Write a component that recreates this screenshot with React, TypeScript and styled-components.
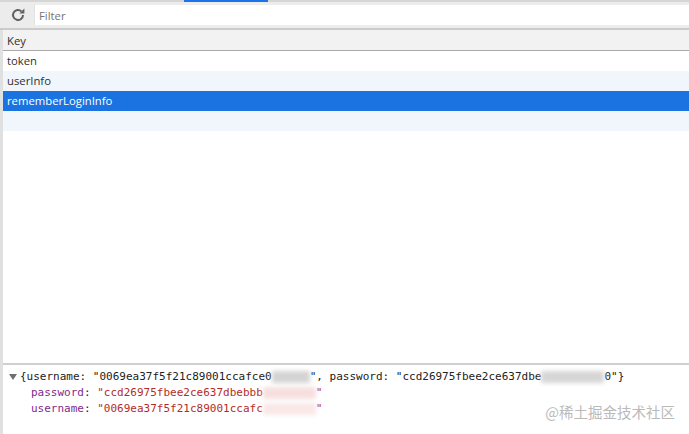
import * as React from "react";
import styled, { createGlobalStyle } from "styled-components";

const rows = ["token", "userInfo", "rememberLoginInfo", ""];

const GlobalStyle = createGlobalStyle`
  html, body {
    margin: 0;
    padding: 0;
    background: #fff;
    overflow: hidden;
  }
`;

const Page = styled.div`
  position: relative;
  width: 689px;
  height: 434px;
  display: flex;
  flex-direction: column;
  overflow: hidden;
  font-family: "Open Sans", "Noto Sans", sans-serif;
  font-size: 11.3px;
  color: #303030;
`;

const TabStrip = styled.div`
  flex: none;
  height: 2px;
  background: #d6d6d6;
  padding-left: 184px;
  i {
    display: block;
    width: 84px;
    height: 2px;
    background: #1a73e8;
  }
`;

const Toolbar = styled.div`
  flex: none;
  box-sizing: border-box;
  height: 28px;
  display: flex;
  align-items: center;
  background: #ececec;
  border-bottom: 2px solid #cbcbcb;
  padding: 0 0 0 10px;
`;

const Reload = styled.svg`
  width: 16px;
  height: 16px;
  flex: none;
  margin-right: 8px;
`;

const Filter = styled.div`
  flex: 1;
  box-sizing: border-box;
  height: 20px;
  background: #fff;
  border-left: 1px solid #e2e2e2;
  padding-left: 4px;
  line-height: 21px;
  color: #757575;
`;

const Panel = styled.div`
  flex: 1;
  display: flex;
  flex-direction: column;
  min-height: 0;
  border-left: 3px solid #e0e0e0;
`;

const HeaderCell = styled.div`
  flex: none;
  box-sizing: border-box;
  height: 21px;
  line-height: 21px;
  padding-left: 4px;
  background: #f2f2f2;
  border-bottom: 1px solid #a9a9a9;
`;

const Table = styled.div`
  flex: 1;
  min-height: 0;
  background: #fff;
`;

const Row = styled.div<{ $alt: boolean; $selected: boolean }>`
  height: 20px;
  line-height: 20px;
  padding-left: 4px;
  background: ${(p) => (p.$selected ? "#1a73e0" : p.$alt ? "#f1f6fd" : "#fff")};
  color: ${(p) => (p.$selected ? "#fff" : "#303030")};
`;

const Detail = styled.div`
  flex: none;
  box-sizing: border-box;
  height: 71px;
  border-top: 2px solid #cfcfcf;
  padding: 4px 0 0 6px;
  background: #fff;
  color: #222;
  font-family: "DejaVu Sans Mono", monospace;
  font-size: 11px;
  line-height: 16px;
  white-space: pre;
`;

const Line = styled.div<{ $indent?: boolean }>`
  display: flex;
  align-items: center;
  padding-left: ${(p) => (p.$indent ? "22px" : "0")};
`;

const Arrow = styled.span`
  width: 0;
  height: 0;
  margin: 0 3px 0 0;
  border-left: 4px solid transparent;
  border-right: 4px solid transparent;
  border-top: 6px solid #6e6e6e;
`;

const Prop = styled.span`
  color: #7f2a8c;
`;

const Str = styled.span`
  color: #b52b27;
`;

const Smudge = styled.span<{ $w: number; $color: string }>`
  flex: none;
  width: ${(p) => p.$w}px;
  height: 12px;
  background: ${(p) => p.$color};
  filter: blur(2px);
`;

const Watermark = styled.div`
  position: absolute;
  right: 14px;
  bottom: 13px;
  font-family: "Noto Sans CJK SC", sans-serif;
  font-size: 14.5px;
  line-height: 18px;
  color: #bababa;
`;

export default function App() {
  return (
    <Page>
      <GlobalStyle />
      <TabStrip>
        <i />
      </TabStrip>
      <Toolbar>
        <Reload viewBox="0 0 16 16" fill="none">
          <path d="M13 8a5 5 0 1 1-1.5-3.6" stroke="#616161" strokeWidth="2" />
          <path d="M9.4 6.6h5V1.6z" fill="#616161" />
        </Reload>
        <Filter>Filter</Filter>
      </Toolbar>
      <Panel>
        <HeaderCell>Key</HeaderCell>
        <Table>
          {rows.map((key, i) => (
            <Row key={i} $alt={i % 2 === 1} $selected={key === "rememberLoginInfo"}>
              {key}
            </Row>
          ))}
        </Table>
        <Detail>
          <Line>
            <Arrow />
            {'{username: "0069ea37f5f21c89001ccafce0'}
            <Smudge $w={38} $color="#d4d4d4" />
            {'", password: "ccd26975fbee2ce637dbe'}
            <Smudge $w={63} $color="#d6d6d6" />
            {'0"}'}
          </Line>
          <Line $indent>
            <Prop>password</Prop>: <Str>"ccd26975fbee2ce637dbebbb</Str>
            <Smudge $w={53} $color="#f7dfdf" />
            <Str>"</Str>
          </Line>
          <Line $indent>
            <Prop>username</Prop>: <Str>"0069ea37f5f21c89001ccafc</Str>
            <Smudge $w={53} $color="#f9e8e8" />
            <Str>"</Str>
          </Line>
        </Detail>
      </Panel>
      <Watermark>@稀土掘金技术社区</Watermark>
    </Page>
  );
}
